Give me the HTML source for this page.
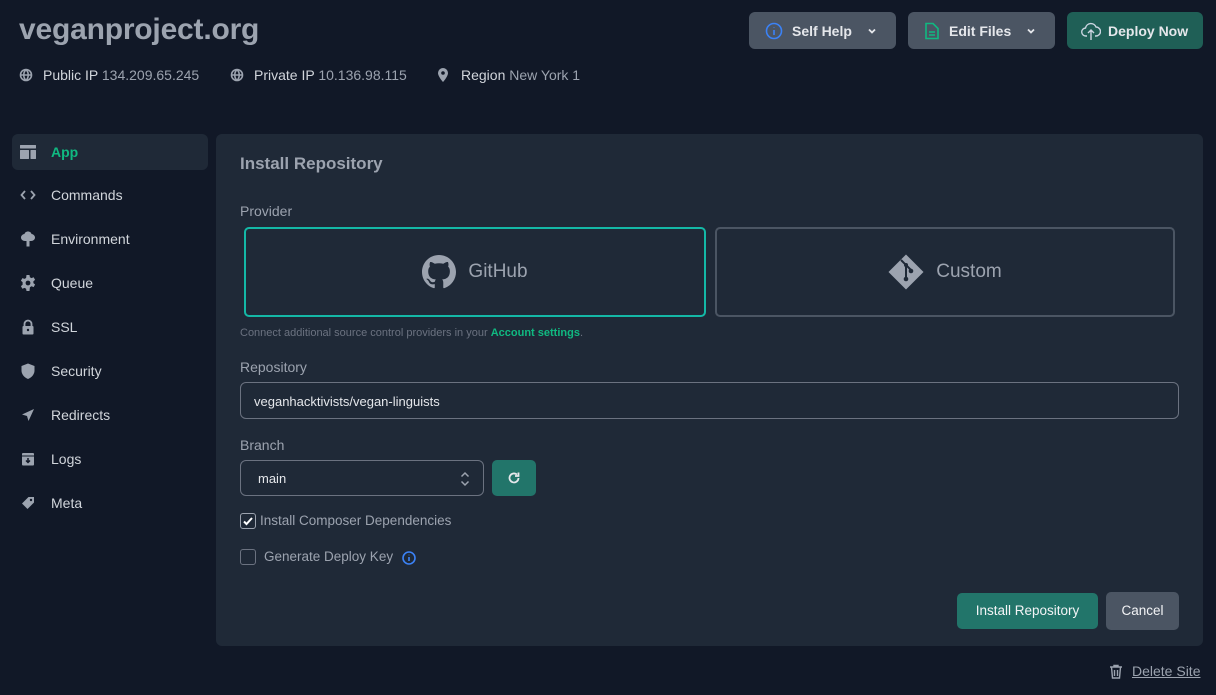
<!DOCTYPE html>
<html><head><meta charset="utf-8"><style>
*{box-sizing:border-box;margin:0;padding:0}
body{width:1216px;height:695px;background:#111827;font-family:"Liberation Sans",sans-serif;color:#d1d5db;position:relative;overflow:hidden}
.abs{position:absolute}
h1{position:absolute;left:19px;top:13px;font-size:30px;font-weight:bold;color:#9ca3af;letter-spacing:-0.2px}
.meta{position:absolute;top:67px;font-size:14px;color:#d1d5db;display:flex;align-items:center;gap:8px}
.meta span{color:#9ca3af}
.btn{position:absolute;top:12px;height:37px;border-radius:6px;background:#4b5563;color:#e5e7eb;font-size:14px;font-weight:bold;display:flex;align-items:center;padding-left:16px;gap:9px}
.side{position:absolute;left:12px;width:196px;height:36px;display:flex;align-items:center;font-size:14px;color:#d1d5db}
.side svg{position:absolute;left:8px}
.side b{position:absolute;left:39px;font-weight:normal}
.panel{position:absolute;left:216px;top:134px;width:987px;height:512px;background:#1f2937;border-radius:6px}
.lbl{position:absolute;left:240px;font-size:14px;color:#9ca3af}
.card{position:absolute;top:227px;height:90px;border-radius:5px;display:flex;align-items:center;justify-content:center;gap:12px;font-size:19px;color:#9ca3af}
</style></head><body>
<h1>veganproject.org</h1>
<div class="meta" style="left:19px"><svg width="14" height="14" viewBox="0 0 14 14" fill="none" stroke="#9ca3af" stroke-width="1.6"><circle cx="7" cy="7" r="5.5"/><path d="M1.5 7h11M7 1.5c-3 3-3 8 0 11M7 1.5c3 3 3 8 0 11"/></svg><div style="margin-left:2px">Public IP <span>134.209.65.245</span></div></div>
<div class="meta" style="left:230px"><svg width="14" height="14" viewBox="0 0 14 14" fill="none" stroke="#9ca3af" stroke-width="1.6"><circle cx="7" cy="7" r="5.5"/><path d="M1.5 7h11M7 1.5c-3 3-3 8 0 11M7 1.5c3 3 3 8 0 11"/></svg><div style="margin-left:2px">Private IP <span>10.136.98.115</span></div></div>
<div class="meta" style="left:437px"><svg width="12" height="14" viewBox="0 0 12 14"><path d="M6 0a5 5 0 0 0-5 5c0 3.5 5 9 5 9s5-5.5 5-9a5 5 0 0 0-5-5z" fill="#9ca3af"/><circle cx="6" cy="5" r="1.8" fill="#111827"/></svg><div style="margin-left:4px">Region <span>New York 1</span></div></div>

<div class="btn" style="left:749px;width:147px"><svg width="18" height="18" viewBox="0 0 18 18" fill="none" stroke="#3b82f6" stroke-width="1.6"><circle cx="9" cy="9" r="7.5"/><path d="M9 8v5M9 5v.5"/></svg>Self Help<svg style="margin-left:6px" width="10" height="8" viewBox="0 0 10 8" fill="none" stroke="#e5e7eb" stroke-width="1.8"><path d="M2 2.5l3 3 3-3"/></svg></div>
<div class="btn" style="left:908px;width:147px"><svg width="16" height="18" viewBox="0 0 16 18" fill="none" stroke="#10b981" stroke-width="1.6"><path d="M2 1.5h7l5 5v10H2z M5 10h6M5 13h6"/></svg>Edit Files<svg style="margin-left:6px" width="10" height="8" viewBox="0 0 10 8" fill="none" stroke="#e5e7eb" stroke-width="1.8"><path d="M2 2.5l3 3 3-3"/></svg></div>
<div class="btn" style="left:1067px;width:136px;background:#1f5f56;padding-left:14px;gap:7px"><svg width="20" height="20" viewBox="0 0 20 20" fill="none" stroke="#cbd5e1" stroke-width="1.4"><path d="M6 15H5a4 4 0 0 1-.5-8A5.5 5.5 0 0 1 15 6a4 4 0 0 1 0 9h-1M10 19V9M7 12l3-3 3 3"/></svg>Deploy Now</div>

<div class="side" style="top:134px;background:#1f2937;border-radius:6px"><svg width="16" height="16" viewBox="0 0 16 16" fill="#9ca3af"><rect x="0" y="1" width="16" height="3.5" rx=".5"/><rect x="0" y="6" width="9" height="9" rx=".5"/><rect x="10.5" y="6" width="5.5" height="9" rx=".5"/></svg><b style="color:#10b981;font-weight:bold">App</b></div>
<div class="side" style="top:177px"><svg width="16" height="12" viewBox="0 0 16 12" fill="none" stroke="#9ca3af" stroke-width="1.8"><path d="M5 2L1.5 6 5 10M11 2l3.5 4-3.5 4"/></svg><b>Commands</b></div>
<div class="side" style="top:221px"><svg width="16" height="16" viewBox="0 0 16 16" fill="#9ca3af"><path d="M8 0.5c2 0 3.3 1.3 3.5 2.5 2 .3 3.5 1.8 3.5 3.5 0 2-1.8 3.5-4 3.5H9.5v5.5h-3V10H5C2.8 10 1 8.5 1 6.5 1 4.8 2.5 3.3 4.5 3 4.7 1.8 6 0.5 8 .5z"/></svg><b>Environment</b></div>
<div class="side" style="top:265px"><svg width="16" height="16" viewBox="0 0 16 16"><path fill="#9ca3af" d="M6.5 0h3l.4 2.2 1.6.9 2.1-.8 1.5 2.6-1.7 1.4v1.8l1.7 1.4-1.5 2.6-2.1-.8-1.6.9L9.5 16h-3l-.4-2.2-1.6-.9-2.1.8-1.5-2.6 1.7-1.4V7.1L.9 5.7l1.5-2.6 2.1.8 1.6-.9z"/><circle cx="8" cy="8" r="2.4" fill="#111827"/></svg><b>Queue</b></div>
<div class="side" style="top:309px"><svg width="16" height="16" viewBox="0 0 16 16"><path d="M4.5 7V5a3.5 3.5 0 0 1 7 0v2" fill="none" stroke="#9ca3af" stroke-width="1.8"/><rect x="2.5" y="7" width="11" height="8.5" rx="1" fill="#9ca3af"/><circle cx="8" cy="11" r="1.2" fill="#111827"/></svg><b>SSL</b></div>
<div class="side" style="top:353px"><svg width="16" height="16" viewBox="0 0 16 16" fill="#9ca3af"><path d="M8 0.5l6.5 2.5v4.5c0 4-3 7-6.5 8.5C4.5 14.5 1.5 11.5 1.5 7.5V3z"/></svg><b>Security</b></div>
<div class="side" style="top:397px"><svg width="16" height="16" viewBox="0 0 16 16" fill="#9ca3af"><path d="M14 2L2 7.5l5 1.5 1.5 5z"/></svg><b>Redirects</b></div>
<div class="side" style="top:441px"><svg width="16" height="16" viewBox="0 0 16 16"><rect x="2" y="2" width="12" height="12.5" rx="1" fill="#9ca3af"/><rect x="2" y="4.5" width="12" height="1" fill="#111827"/><path d="M8 7v4.5M6 9.5l2 2 2-2" stroke="#111827" stroke-width="1.5" fill="none"/></svg><b>Logs</b></div>
<div class="side" style="top:485px"><svg width="16" height="16" viewBox="0 0 16 16"><path fill="#9ca3af" d="M8.5 2H14v5.5L7.5 14 2 8.5z"/><circle cx="11" cy="5" r="1.2" fill="#111827"/></svg><b>Meta</b></div>

<div class="panel"></div>
<div class="abs" style="left:240px;top:154px;font-size:17px;font-weight:bold;color:#9ca3af">Install Repository</div>
<div class="lbl" style="top:203px">Provider</div>
<div class="card" style="left:244px;width:462px;border:2px solid #14b8a6"><svg width="34" height="34" viewBox="0 0 16 16" fill="#9ca3af"><path d="M8 0C3.58 0 0 3.58 0 8c0 3.54 2.29 6.530 5.47 7.590.4.07.55-.17.55-.38 0-.19-.01-.82-.01-1.49-2.010.37-2.53-.49-2.69-.94-.09-.23-.48-.94-.82-1.13-.28-.15-.68-.52-.01-.53.63-.01 1.080.58 1.230.82.72 1.210 1.870.87 2.330.66.07-.52.28-.87.51-1.07-1.78-.2-3.64-.89-3.64-3.95 0-.87.31-1.59.82-2.15-.08-.2-.36-1.02.08-2.12 0 0 .67-.21 2.2.82.64-.18 1.32-.27 2-.27.68 0 1.36.09 2 .27 1.53-1.04 2.2-.82 2.2-.82.44 1.1.16 1.92.08 2.12.51.56.82 1.27.82 2.15 0 3.07-1.87 3.75-3.65 3.95.29.25.54.73.54 1.48 0 1.07-.01 1.93-.01 2.2 0 .21.15.46.55.38A8.013 8.013 0 0016 8c0-4.42-3.58-8-8-8z"/></svg>GitHub</div>
<div class="card" style="left:715px;width:460px;border:2px solid #4b5563"><svg width="36" height="36" viewBox="0 0 36 36"><path fill="#9ca3af" d="M18 0.5L35.5 18 18 35.5 0.5 18z"/><path d="M13 6l5 5v13M18 11l5 5" stroke="#1f2937" stroke-width="2" fill="none"/><circle cx="18" cy="11" r="2" fill="#1f2937"/><circle cx="18" cy="25" r="2.3" fill="#1f2937"/><circle cx="23" cy="17" r="2.3" fill="#1f2937"/></svg>Custom</div>
<div class="abs" style="left:240px;top:327px;font-size:11px;color:#6b7280">Connect additional source control providers in your <b style="color:#10b981">Account settings</b>.</div>
<div class="lbl" style="top:359px">Repository</div>
<div class="abs" style="left:240px;top:382px;width:939px;height:37px;border:1px solid #6b7280;border-radius:6px;font-size:13px;color:#e5e7eb;padding:11px 0 0 13px">veganhacktivists/vegan-linguists</div>
<div class="lbl" style="top:437px">Branch</div>
<div class="abs" style="left:240px;top:460px;width:244px;height:36px;border:1px solid #6b7280;border-radius:6px;font-size:13px;color:#e5e7eb;padding:10px 0 0 17px">main<svg style="position:absolute;right:13px;top:10px" width="10" height="16" viewBox="0 0 10 16" fill="none" stroke="#9ca3af" stroke-width="1.5"><path d="M1.5 5.5L5 2l3.5 3.5M1.5 10.5L5 14l3.5-3.5"/></svg></div>
<div class="abs" style="left:492px;top:460px;width:44px;height:36px;border-radius:5px;background:#22756a"><svg style="position:absolute;left:15px;top:11px" width="14" height="14" viewBox="0 0 14 14" fill="none" stroke="#e5e7eb" stroke-width="1.8"><path d="M11.5 7A4.5 4.5 0 1 1 10 3.6"/><path d="M11.5 1.5v3.5H8" /></svg></div>
<div class="abs" style="left:240px;top:513px;width:16px;height:16px;border:1px solid #9ca3af;border-radius:3px"><svg width="14" height="14" viewBox="0 0 14 14" fill="none" stroke="#fff" stroke-width="2"><path d="M3 7.5l2.5 2.5L11 4"/></svg></div>
<div class="abs" style="left:260px;top:513px;font-size:13.5px;color:#9ca3af">Install Composer Dependencies</div>
<div class="abs" style="left:240px;top:549px;width:16px;height:16px;border:1px solid #6b7280;border-radius:3px"></div>
<div class="abs" style="left:264px;top:549px;font-size:13.5px;color:#9ca3af">Generate Deploy Key</div>
<svg class="abs" style="left:402px;top:551px" width="14" height="14" viewBox="0 0 14 14" fill="none" stroke="#3b82f6" stroke-width="1.6"><circle cx="7" cy="7" r="6"/><path d="M7 6v4M7 3.7v.6"/></svg>
<div class="abs" style="left:957px;top:593px;width:141px;height:36px;border-radius:5px;background:#22756a;color:#f3f4f6;font-size:13.5px;text-align:center;line-height:36px">Install Repository</div>
<div class="abs" style="left:1106px;top:592px;width:73px;height:38px;border-radius:5px;background:#4b5563;color:#f3f4f6;font-size:13.5px;text-align:center;line-height:38px">Cancel</div>
<svg class="abs" style="left:1109px;top:664px" width="14" height="15" viewBox="0 0 14 15" fill="none" stroke="#9ca3af" stroke-width="1.4"><path d="M1 3h12M5 3V1.5h4V3M2.5 3l1 11h7l1-11M5.5 6v6M8.5 6v6"/></svg>
<div class="abs" style="left:1132px;top:663px;font-size:14px;color:#9ca3af;text-decoration:underline">Delete Site</div>
</body></html>
